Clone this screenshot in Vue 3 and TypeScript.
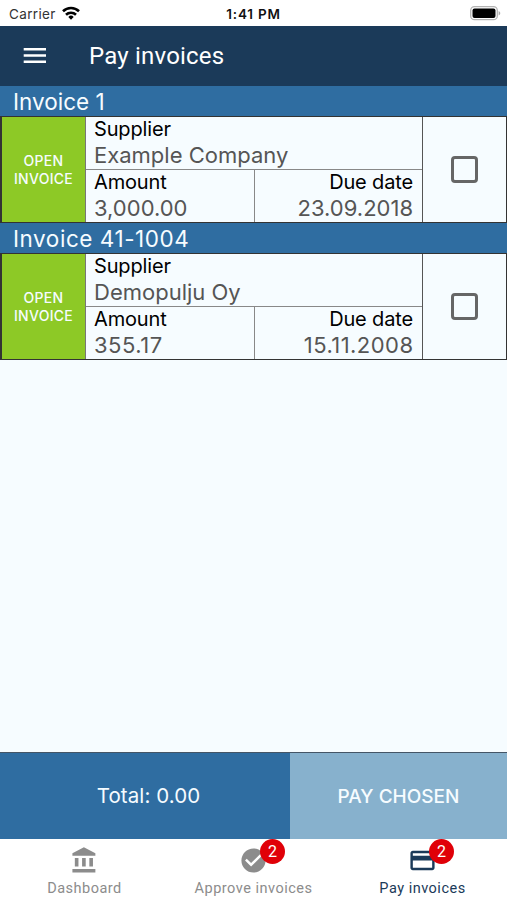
<script setup lang="ts">
import { ref } from 'vue'

interface Invoice {
  id: string
  supplier: string
  amount: string
  due: string
  chosen: boolean
}

const invoices = ref<Invoice[]>([
  { id: '1', supplier: 'Example Company', amount: '3,000.00', due: '23.09.2018', chosen: false },
  { id: '41-1004', supplier: 'Demopulju Oy', amount: '355.17', due: '15.11.2008', chosen: false },
])

const tabs = [
  { label: 'Dashboard', badge: 0, active: false, path: 'M4 10v7h3v-7H4zm6 0v7h3v-7h-3zM2 22h19v-3H2v3zm14-12v7h3v-7h-3zm-4.500-9L2 6v2h19V6l-9.500-5z' },
  { label: 'Approve invoices', badge: 2, active: false, path: 'M12 2C6.480 2 2 6.480 2 12s4.480 10 10 10 10-4.480 10-10S17.520 2 12 2zm-2 15l-5-5 1.410-1.410L10 14.170l7.590-7.590L19 8l-9 9z' },
  { label: 'Pay invoices', badge: 2, active: true, path: 'M20 4H4c-1.110 0-1.990.890-1.990 2L2 18c0 1.110.890 2 2 2h16c1.110 0 2-.890 2-2V6c0-1.110-.890-2-2-2zm0 14H4v-6h16v6zm0-10H4V6h16v2z' },
]
</script>

<template>
  <div class="screen">
    <div class="status">
      <div class="carrier">
        <span>Carrier</span>
        <svg width="18" height="14" viewBox="0 0 18 14" fill="none" stroke="#000" stroke-width="2.600">
          <path d="M1 5.200a11.500 11.500 0 0 1 16 0" />
          <path d="M4 8.700a7.200 7.200 0 0 1 10 0" />
          <path d="M9 13.800l-2.700-2.900a3.900 3.900 0 0 1 5.400 0z" fill="#000" stroke="none" />
        </svg>
      </div>
      <div class="clock">1:41 PM</div>
      <svg class="battery" width="31" height="15" viewBox="0 0 31 15">
        <rect x="0.700" y="0.700" width="26.600" height="13" rx="3.800" fill="#fff" stroke="#b3b3b3" stroke-width="1.300" />
        <rect x="2.500" y="2.500" width="23" height="9.400" rx="2" fill="#000" />
        <path d="M28.600 5c2.200.9 2.200 3.600 0 4.500z" fill="#aaa" />
      </svg>
    </div>

    <header class="appbar">
      <svg width="24" height="16" viewBox="0 0 24 16" fill="#fff">
        <path d="M.7 0h22.300v2.600H.7zM.7 6.200h22.300v2.600H.7zM.7 12.400h22.300V15H.7z" />
      </svg>
      <h1>Pay invoices</h1>
    </header>

    <main class="list">
      <section v-for="invoice in invoices" :key="invoice.id">
        <h2>Invoice {{ invoice.id }}</h2>
        <div class="card">
          <button class="open" type="button"><span>OPEN</span><span>INVOICE</span></button>
          <div class="details">
            <div class="cell supplier">
              <span class="label">Supplier</span>
              <span class="value">{{ invoice.supplier }}</span>
            </div>
            <div class="pair">
              <div class="cell amount">
                <span class="label">Amount</span>
                <span class="value">{{ invoice.amount }}</span>
              </div>
              <div class="cell due">
                <span class="label">Due date</span>
                <span class="value">{{ invoice.due }}</span>
              </div>
            </div>
          </div>
          <label class="pick"><input v-model="invoice.chosen" type="checkbox" /></label>
        </div>
      </section>
    </main>

    <div class="summary">
      <div class="total">Total: 0.00</div>
      <button class="pay" type="button">PAY CHOSEN</button>
    </div>

    <nav class="tabs">
      <div v-for="tab in tabs" :key="tab.label" class="tab" :class="{ active: tab.active }">
        <div class="icon">
          <svg width="29" height="29" viewBox="0 0 24 24" fill="currentColor"><path :d="tab.path" /></svg>
          <span v-if="tab.badge" class="badge">{{ tab.badge }}</span>
        </div>
        <span class="tab-label">{{ tab.label }}</span>
      </div>
    </nav>
  </div>
</template>

<style>
body {
  margin: 0;
}
</style>

<style scoped>
.screen {
  width: 507px;
  height: 900px;
  display: flex;
  flex-direction: column;
  background: #f6fcff;
  font-family: Inter, "Liberation Sans", sans-serif;
  overflow: hidden;
}
.screen * {
  box-sizing: border-box;
}
button {
  border: 0;
  padding: 0;
  font: inherit;
}
.status {
  height: 26px;
  flex: none;
  display: grid;
  grid-template-columns: 1fr auto 1fr;
  align-items: center;
  padding: 1px 6px 0 9px;
  background: #fff;
  font-size: 13.500px;
}
.carrier {
  display: flex;
  align-items: center;
  gap: 6px;
  color: #333;
  letter-spacing: 0.350px;
}
.carrier svg {
  margin-bottom: 2px;
}
.clock {
  font-weight: 600;
  color: #111;
  letter-spacing: 0.800px;
  margin-right: 3px;
}
.battery {
  justify-self: end;
}
.appbar {
  height: 60px;
  flex: none;
  display: flex;
  align-items: center;
  padding-left: 23px;
  gap: 42px;
  background: #1b3a59;
  color: #fff;
}
h1 {
  margin: 0;
  font: 400 24px/30px Roboto, sans-serif;
  letter-spacing: 0.200px;
}
.list {
  flex: 1;
}
h2 {
  margin: 0;
  height: 30px;
  padding-left: 13px;
  background: #2f6da1;
  color: #f6fcff;
  font-size: 22.500px;
  font-weight: 400;
  line-height: 31px;
}
section + section h2 {
  letter-spacing: 0.550px;
}
.card {
  display: flex;
  height: 107px;
  border: 1px solid #333;
  border-left-width: 2px;
}
.open {
  width: 83px;
  display: flex;
  flex-direction: column;
  align-items: center;
  justify-content: center;
  background: #8dc926;
  color: #f6fcff;
  font-size: 14px;
  font-weight: 500;
  line-height: 17.500px;
  letter-spacing: 0.300px;
}
.details {
  flex: 1;
  border-left: 1px solid #777;
  border-right: 1px solid #555;
}
.cell {
  display: flex;
  flex-direction: column;
  padding: 0 9px 0 8px;
  height: 52px;
}
.supplier {
  height: 53px;
  border-bottom: 1px solid #888;
}
.pair {
  display: grid;
  grid-template-columns: 169px 1fr;
}
.amount {
  border-right: 1px solid #888;
}
.due {
  align-items: flex-end;
}
.label {
  height: 26px;
  font-size: 20px;
  line-height: 24px;
  letter-spacing: -0.150px;
  color: #000;
}
.value {
  height: 26px;
  font-size: 22px;
  line-height: 25px;
  color: #555;
}
section + section .due .value {
  letter-spacing: 0.450px;
  margin-right: -0.450px;
}
section + section .amount .value {
  letter-spacing: 0.500px;
}
.pick {
  width: 83px;
  display: grid;
  place-items: center;
}
.pick input {
  appearance: none;
  width: 27px;
  height: 27px;
  margin: 0;
  border: 3px solid #666;
  border-radius: 4px;
}
.summary {
  height: 87px;
  flex: none;
  display: grid;
  grid-template-columns: 290px 1fr;
  border-top: 1px solid #456;
  color: #f6fcff;
}
.total {
  padding-left: 7px;
  background: #2f6da1;
  font-size: 20.500px;
  line-height: 86px;
  letter-spacing: 0.100px;
  text-align: center;
}
.pay {
  background: #87b1cd;
  color: #f6fcff;
  font-size: 19px;
  font-weight: 500;
}
.tabs {
  height: 61px;
  flex: none;
  display: grid;
  grid-template-columns: repeat(3, 1fr);
  background: #fff;
}
.tab {
  display: flex;
  flex-direction: column;
  align-items: center;
  padding-top: 7px;
  color: #8c8c8c;
}
.tab.active {
  color: #1b3a59;
}
.icon {
  position: relative;
  height: 29px;
}
.badge {
  position: absolute;
  left: 21px;
  top: -7px;
  width: 25px;
  height: 25px;
  border-radius: 50%;
  background: #e00008;
  color: #fff;
  font: 400 16px/25px Roboto, sans-serif;
  text-align: center;
}
.tab-label {
  margin-top: 4px;
  font: 400 14.500px/19px Roboto, sans-serif;
  letter-spacing: 0.500px;
}
</style>
